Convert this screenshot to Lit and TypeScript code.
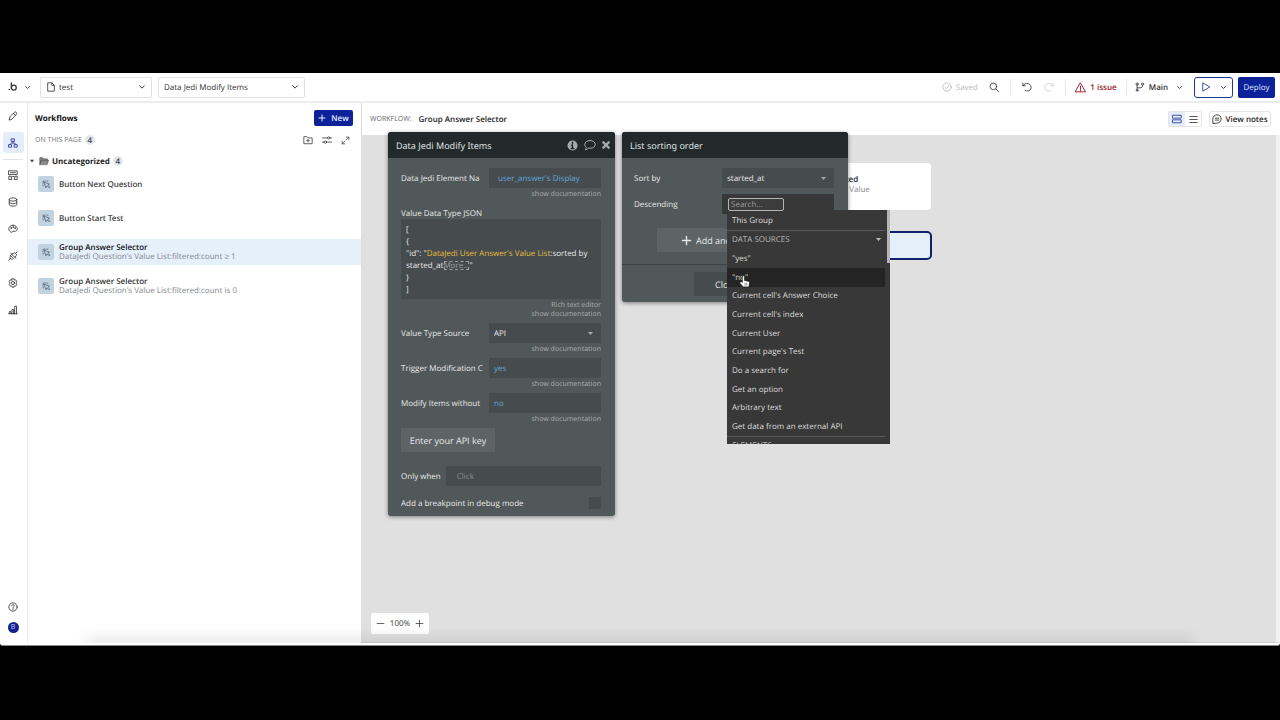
import { LitElement, html, css, svg, nothing } from "lit";
import { customElement, property } from "lit/decorators.js";
import { classMap } from "lit/directives/class-map.js";

const glyphs: Record<string, unknown> = {
  logo: svg`<circle cx="3" cy="18" r="1.8" fill="currentColor" stroke="none"/><path d="M8 2v12" stroke-width="3"/><circle cx="14" cy="13.5" r="5.8" stroke-width="3"/>`,
  down: svg`<path d="M5 8.500l7 7 7-7"/>`,
  file: svg`<path d="M5 2h9l6 6v14H5z"/><path d="M14 2v6h6"/>`,
  pencil: svg`<path d="M3 21l1.500-7L15 3.500a3.200 3.200 0 0 1 5 0 3.200 3.200 0 0 1 0 4.500L10 19z"/><path d="M13 5.500l5.500 5.500"/>`,
  tree: svg`<rect x="8.500" y="2" width="7" height="6"/><rect x="2" y="16" width="6.500" height="6"/><rect x="15.500" y="16" width="6.500" height="6"/><path d="M12 8v4M5 16l3-4h8l3 4"/>`,
  layout: svg`<rect x="2" y="2" width="20" height="9"/><path d="M2 22v-7h5l2 7zM22 22v-7h-5l-2 7zM9 16h6M6 6.500h12"/>`,
  db: svg`<ellipse cx="12" cy="6" rx="9" ry="4"/><path d="M3 6v12c0 2.200 3.800 4 9 4s9-1.800 9-4V6M3 12c0 2.200 3.800 4 9 4s9-1.800 9-4"/>`,
  palette: svg`<path d="M12 3c-6 0-10 4-10 8.500S5.500 20 9 20c2 0 1.500-2 3-3s3 1.500 6 .5 4-3.500 4-6C22 6.500 18 3 12 3z"/><circle cx="7.500" cy="9.500" r="1"/><circle cx="12.500" cy="7.500" r="1"/><circle cx="17" cy="10" r="1"/>`,
  plug: svg`<path d="M2 22l4.500-4.500M6 11l7 7-2.500 1.500c-2 1-4 .5-5-1s-1.500-3-.5-4.500zM9 8l7 7 3-3c2-2 1.500-4.500 0-6s-4-2-6-.5zM19 5l3-3M7 5l2 3M16 15l3 2"/>`,
  gear: svg`<path d="M9.500 2h5l1 3.200 3.200-.7 2.500 4.200-2.200 3.300 2.200 3.300-2.500 4.200-3.200-.7-1 3.200h-5l-1-3.200-3.200.7-2.500-4.200L5 12 2.800 8.700l2.500-4.200 3.200.7z"/><circle cx="12" cy="12" r="3.800"/>`,
  bars: svg`<path d="M2 21h20M3 21v-5h4v5M9.500 21V11h4v10M16 21V3h4.500v18"/>`,
  help: svg`<circle cx="12" cy="12" r="10"/><path d="M8.800 9.300C9 7.500 10.300 6.500 12 6.500s3.200 1.100 3.200 2.800c0 2.300-3.200 2.300-3.200 4.700M12 16.200v1.800"/>`,
  plus: svg`<path d="M12 3v18M3 12h18"/>`,
  minus: svg`<path d="M3 12h18"/>`,
  addFolder: svg`<path d="M2 20V4h7l2 3h11v13zM12 10.500v6M9 13.500h6"/>`,
  sliders: svg`<path d="M1 7h12M19 7h4M1 17h4M11 17h12"/><circle cx="16" cy="7" r="2.800"/><circle cx="8" cy="17" r="2.800"/>`,
  expand: svg`<path d="M14 3h7v7M21 3l-7.500 7.500M10 21H3v-7M3 21l7.500-7.500"/>`,
  folder: svg`<path d="M2 20V4h7l2 3h9v3M2 20L5.500 10H23l-3.500 10z" fill="#8a8a8a"/>`,
  tri: svg`<path d="M3 7h18l-9 10z" fill="currentColor" stroke="none"/>`,
  click: svg`<path d="M6 6l14 5-4.500 2.500L21 19l-2 2-5.500-5.500L11 20zM3 9V3h6M3 13v3M13 3h3"/>`,
  saved: svg`<circle cx="12" cy="12" r="10"/><path d="M7 12.500l3.500 3.500L17 8.500"/>`,
  search: svg`<circle cx="10.500" cy="10.500" r="8"/><path d="M16.500 16.500L23 23"/>`,
  undo: svg`<path d="M2 3v6h6M2.500 9C5 4 10 2.500 14.500 4a9 9 0 1 1-7 16"/>`,
  redo: svg`<path d="M22 3v6h-6M21.500 9C19 4 14 2.500 9.500 4a9 9 0 1 0 7 16"/>`,
  warn: svg`<path d="M12 2.500L23 21.500H1zM12 9v7M12 18v1.800"/>`,
  branch: svg`<circle cx="5" cy="5" r="2.600"/><circle cx="5" cy="20" r="2.200"/><circle cx="18" cy="5" r="2.600"/><path d="M5 8v10M18 8c0 5-2 6-6 6H6"/>`,
  play: svg`<path d="M5 2.500L21 12 5 21.500z"/>`,
  cards: svg`<rect x="2" y="3" width="20" height="7"/><rect x="2" y="14" width="20" height="7"/>`,
  lines: svg`<path d="M2 4h20M2 12h20M2 20h20"/>`,
  note: svg`<path d="M2 22V12a10 10 0 1 1 10 10z"/><path d="M8 10h8M8 14.500h8"/>`,
  info: svg`<circle cx="12" cy="12" r="11" fill="currentColor" stroke="none"/><path d="M12 5v3M9.500 11.500H12V18M9 18.500h6" stroke="#22282a" stroke-width="3"/>`,
  bubble: svg`<path d="M12 3c6 0 10.500 3.500 10.500 8S18 18.500 12 18.500c-1 0-2-.1-3-.4C7 20 4.500 21.500 2.500 21.500c1.200-1.200 2-3 2-4.800C2.500 15 1.500 13 1.500 11c0-4.500 4.500-8 10.500-8z"/>`,
  cross: svg`<path d="M4 4l16 16M20 4L4 20" stroke-width="7"/>`,
  hand: svg`<path d="M8 13V3.500a2 2 0 0 1 4 0V10l7 1.500c2 .5 2.500 2 2.300 4L20 22H9.500L3.500 15c-1-1.500.8-3.500 2.500-2.500z" fill="#fff" stroke="#111" stroke-width="1.200"/><path d="M13 15v4M16 15v4" stroke="#333" stroke-width="1"/>`,
};

@customElement("bub-icon")
class BubIcon extends LitElement {
  @property() name = "";
  @property({ type: Number }) size = 11;
  @property({ type: Number }) weight = 2;
  static styles = css`
    :host { display: inline-flex; flex: none; }
    svg { display: block; fill: none; stroke: currentColor; stroke-linecap: round; stroke-linejoin: round; }
  `;
  render() {
    return html`<svg width=${this.size} height=${this.size} viewBox="0 0 24 24" stroke-width=${this.weight} aria-hidden="true">${glyphs[this.name]}</svg>`;
  }
}

const ic = (name: string, size = 11, weight = 2) =>
  html`<bub-icon .name=${name} .size=${size} .weight=${weight}></bub-icon>`;

const base = css`
  *, :host { box-sizing: border-box; }
  button, input, select { font: inherit; text-rendering: inherit; color: inherit; margin: 0; padding: 0; border: 0; background: none; border-radius: 0; outline: none; }
  select { appearance: none; }
  button { display: inline-flex; align-items: center; justify-content: center; }
  .pick { display: grid; align-items: center; }
  .pick > * { grid-area: 1 / 1; }
  .pick > bub-icon { justify-self: end; pointer-events: none; }
`;

@customElement("top-bar")
class TopBar extends LitElement {
  static styles = [base, css`
    :host { display: flex; align-items: center; height: 30px; padding: 0 5px 0 8px; background: #fff; border-bottom: 2px solid #ececec; color: #333; }
    .brand { gap: 6px; width: 22px; margin-right: 10px; }
    .pick { height: 21px; border: 1px solid #e2e2e2; border-radius: 2px; margin-right: 6px; padding-right: 5px; }
    .page { width: 112px; padding-left: 5px; }
    .page select { padding-left: 13px; }
    .item { width: 147px; padding-left: 5px; }
    .page .lead { justify-self: start; }
    .right { margin-left: auto; display: flex; align-items: center; }
    .right > * { height: 16px; display: flex; align-items: center; justify-content: center; }
    .saved { gap: 4px; color: #b9b9b9; }
    .search { width: 32px; }
    .undo { width: 32px; border-left: 1px solid #e6e6e6; }
    .redo { width: 23px; color: #ccc; padding-right: 9px; }
    .issue { width: 62px; gap: 4px; color: #951420; border: solid #e6e6e6; border-width: 0 1px; font-weight: 600; }
    .main { width: 64px; gap: 4px; font-weight: 600; margin-right: 3px; }
    .main span { margin-right: 4px; }
    .right .play { width: 39px; height: 21px; gap: 9px; border: 1px solid #1c3a94; border-radius: 3px; color: #1c2f94; margin-right: 5px; }
    .right .deploy { width: 37px; height: 21px; border-radius: 2px; background: #0d2298; color: #dfe5fa; }
  `];
  render() {
    return html`
      <button class="brand" aria-label="Menu">${ic("logo", 10, 2)}${ic("down", 7, 3)}</button>
      <div class="pick page"><bub-icon class="lead" .name=${"file"} .size=${10}></bub-icon><select aria-label="Page"><option>test</option></select>${ic("down", 8, 3)}</div>
      <div class="pick item"><select aria-label="Element"><option>Data Jedi Modify Items</option></select>${ic("down", 8, 3)}</div>
      <div class="right">
        <span class="saved">${ic("saved", 10)}Saved</span>
        <button class="search" aria-label="Search">${ic("search", 10, 2)}</button>
        <button class="undo" aria-label="Undo">${ic("undo", 10, 2)}</button>
        <button class="redo" aria-label="Redo">${ic("redo", 10, 2)}</button>
        <button class="issue">${ic("warn", 11)}1 issue</button>
        <button class="main">${ic("branch", 10)}<span>Main</span>${ic("down", 7, 3)}</button>
        <button class="play" aria-label="Preview">${ic("play", 10)}${ic("down", 7, 3)}</button>
        <button class="deploy">Deploy</button>
      </div>`;
  }
}

@customElement("side-rail")
class SideRail extends LitElement {
  static styles = [base, css`
    :host { display: flex; flex-direction: column; align-items: center; gap: 6px; width: 28px; padding: 2px 2px 8px 1px; background: #fff; border-right: 1px solid #e8e8e8; color: #333; }
    button { width: 21px; height: 21px; border-radius: 2px; }
    .on { background: #e4eefb; color: #26339a; }
    hr { width: 20px; height: 1px; border: 0; margin: 0 0 -2px; background: #e2e2e2; }
    .help { margin-top: auto; margin-bottom: -1px; }
    .me { width: 11px; height: 11px; border-radius: 50%; background: #12218c; color: #c8d0ff; font-size: 7px; margin-bottom: 2px; }
  `];
  render() {
    return html`
      <button aria-label="Design">${ic("pencil", 10)}</button>
      <button class="on" aria-label="Workflow">${ic("tree", 10)}</button>
      <hr />
      ${["layout", "db", "palette", "plug", "gear", "bars"].map((n) => html`<button aria-label=${n}>${ic(n, 10)}</button>`)}
      <button class="help" aria-label="Help">${ic("help", 10)}</button>
      <button class="me" aria-label="Account">B</button>`;
  }
}

@customElement("workflow-list")
class WorkflowList extends LitElement {
  rows = [
    { title: "Button Next Question" },
    { title: "Button Start Test" },
    { title: "Group Answer Selector", note: "DataJedi Question's Value List:filtered:count ≥ 1", on: true },
    { title: "Group Answer Selector", note: "DataJedi Question's Value List:filtered:count is 0" },
  ] as { title: string; note?: string; on?: boolean }[];
  static styles = [base, css`
    :host { display: flex; flex-direction: column; width: 333px; background: #fff; color: #333; }
    .head { display: flex; align-items: center; justify-content: space-between; height: 30px; padding: 0 8px 0 7px; }
    h2 { margin: 0; font-size: 8px; font-weight: 700; color: #111; }
    .new { width: 39px; height: 16px; gap: 5px; border-radius: 2px; background: #0d2298; color: #e8ecff; font-weight: 600; }
    .sub { display: flex; align-items: center; height: 14px; padding: 0 11px 0 7px; font-size: 7px; color: #777; }
    .count { display: inline-flex; justify-content: center; align-items: center; width: 10px; height: 10px; border-radius: 5px; background: #e3e7ec; color: #444; font-size: 8px; font-weight: 600; margin-left: 3px; }
    .tools { margin-left: auto; display: flex; gap: 9px; color: #444; }
    .group { display: flex; align-items: center; height: 16px; margin: 6px 0 2px; padding-left: 1px; font-weight: 700; color: #222; gap: 3px; }
    .group button { gap: 4px; color: #444; }
    .group .count { margin-left: 0; }
    .list { display: flex; flex-direction: column; gap: 8px; }
    .row { display: flex; justify-content: flex-start; text-align: left; gap: 5px; height: 26px; padding-left: 10px; }
    .on { background: #e6f0fb; }
    .on b { color: #111; }
    b { display: block; font-weight: 500; font-family: "Noto Sans", sans-serif; }
    .noted b { font-weight: 600; font-family: "Open Sans", sans-serif; }
    .note { display: block; color: #8b8f94; font-family: "Noto Sans", sans-serif; }
    .text { line-height: 9px; }
    .ico { display: flex; align-items: center; justify-content: center; width: 16px; height: 16px; border-radius: 2px; background: #c3d2df; color: #4c6378; }
  `];
  render() {
    return html`
      <div class="head"><h2>Workflows</h2><button class="new">${ic("plus", 8, 3)}New</button></div>
      <div class="sub">ON THIS PAGE<span class="count">4</span>
        <div class="tools"><button aria-label="New folder">${ic("addFolder", 10)}</button><button aria-label="Filter">${ic("sliders", 10)}</button><button aria-label="Expand">${ic("expand", 9)}</button></div>
      </div>
      <div class="group"><button aria-label="Collapse">${ic("tri", 6)}${ic("folder", 10, 1.5)}</button>Uncategorized<span class="count">4</span></div>
      <div class="list">
        ${this.rows.map((r) => html`<button class=${classMap({ row: true, on: !!r.on, noted: !!r.note })}>
          <span class="ico">${ic("click", 9)}</span>
          <span class="text"><b>${r.title}</b>${r.note ? html`<span class="note">${r.note}</span>` : nothing}</span>
        </button>`)}
      </div>`;
  }
}

const panel = css`
  .panel { background: #515859; color: #e6e8e8; border-radius: 3px; box-shadow: 0 1px 4px rgba(0, 0, 0, 0.45); }
  .bar { display: flex; align-items: center; height: 26px; padding: 0 5px 0 8px; background: #22292a; border-radius: 3px 3px 0 0; gap: 6px; color: #a4a9a9; }
  .bar h3 { margin: 0; flex: 1; font-family: "Noto Sans", sans-serif; font-size: 9px; font-weight: 400; color: #dfe2e2; }
  .field { height: 20px; background: #464c4d; min-width: 0; width: 100%; }
  .line { display: flex; justify-content: space-between; align-items: center; height: 20px; }
  .line .pick, .line > input { width: 112px; flex: none; }
  .line select, .line input { padding-left: 5px; }
  .line label { white-space: nowrap; }
  .pick > bub-icon { color: #a0a5a5; margin-right: 7px; }
`;

@customElement("modify-panel")
class ModifyPanel extends LitElement {
  static styles = [base, panel, css`
    :host { display: block; }
    .body { padding: 10px 14px 7px 13px; }
    .doc { display: block; height: 12px; margin-bottom: 3px; font-family: "Noto Sans", sans-serif; font-size: 7px; line-height: 14px; text-align: right; color: #a4a9a9; text-decoration: none; }
    .line .expr { color: #62a5dd; }
    .line .inset { padding-left: 9px; }
    .head { display: block; height: 12px; margin-top: 7px; line-height: 13px; }
    .json { min-height: 80px; padding: 5px 5px 3px; line-height: 12px; background: #464c4d; }
    .json em { font-style: normal; color: #e3bd3f; }
    .json i { font-style: normal; color: #9a9f9f; outline: 1px dashed #9a9f9f; outline-offset: -2px; }
    .links { display: flex; flex-direction: column; align-items: flex-end; padding-top: 2px; margin-bottom: 4px; font-family: "Noto Sans", sans-serif; font-size: 7px; }
    .links a { line-height: 9px; color: #a4a9a9; text-decoration: none; }
    .key { width: 94px; height: 24px; background: #5e6465; font-size: 9px; }
    .when { display: flex; align-items: center; gap: 5px; margin-top: 14px; white-space: nowrap; }
    .when input { padding-left: 11px; }
    .when input::placeholder { color: #898e8f; opacity: 1; }
    .break { display: flex; justify-content: space-between; align-items: center; margin-top: 11px; height: 12px; }
    .break input { appearance: none; width: 12px; height: 12px; background: #464c4d; }
  `];
  doc = html`<a class="doc" href="#">show documentation</a>`;
  render() {
    return html`<section class="panel">
      <header class="bar"><h3>Data Jedi Modify Items</h3><button aria-label="Info">${ic("info", 11)}</button><button aria-label="Comment">${ic("bubble", 12)}</button><button aria-label="Close">${ic("cross", 8)}</button></header>
      <div class="body">
        <div class="line"><label for="name">Data Jedi Element Na</label><input id="name" class="field expr inset" value="user_answer's Display" /></div>
        ${this.doc}
        <span class="head" id="json">Value Data Type JSON</span>
        <div class="json" role="textbox" aria-labelledby="json">[<br />{<br />"id": "<em>DataJedi User Answer's Value List</em>:sorted by started_at<i>More...</i>"<br />}<br />]</div>
        <div class="links"><a href="#">Rich text editor</a><a href="#">show documentation</a></div>
        <div class="line"><label for="src">Value Type Source</label><div class="pick"><select id="src" class="field"><option>API</option></select>${ic("tri", 7)}</div></div>
        ${this.doc}
        <div class="line"><label for="trig">Trigger Modification C</label><input id="trig" class="field expr" value="yes" /></div>
        ${this.doc}
        <div class="line"><label for="mod">Modify Items without</label><input id="mod" class="field expr" value="no" /></div>
        ${this.doc}
        <button class="key">Enter your API key</button>
        <div class="when"><label for="when">Only when</label><input id="when" class="field" placeholder="Click" /></div>
        <div class="break"><label for="brk">Add a breakpoint in debug mode</label><input id="brk" type="checkbox" /></div>
      </div>
    </section>`;
  }
}

@customElement("source-menu")
class SourceMenu extends LitElement {
  items = ['"yes"', '"no"', "Current cell's Answer Choice", "Current cell's index", "Current User", "Current page's Test", "Do a search for", "Get an option", "Arbitrary text", "Get data from an external API"];
  static styles = [base, css`
    :host { display: block; position: relative; height: 234px; padding: 2px 5px 0 0; overflow: hidden; background: #383838; color: #dcdcdc; }
    .list { display: grid; grid-template-rows: repeat(12, 1fr); height: 224px; }
    .list > button, .more { justify-content: space-between; text-align: left; padding: 0 3px 0 5px; white-space: nowrap; }
    .list > .top { border-bottom: 1px solid #5a5a5a; }
    .sect { color: #b9b9b9; }
    .hot { background: #242424; }
    .more { border-top: 1px solid #5a5a5a; color: #b9b9b9; line-height: 18px; }
    .thumb { position: absolute; top: 0; right: 0; width: 3px; height: 53px; background: #b5b5b5; }
    .cursor { position: absolute; left: 11px; top: 65px; }
  `];
  render() {
    return html`<div class="list">
      <button class="top">This Group</button>
      <button class="sect">DATA SOURCES${ic("tri", 7)}</button>
      ${this.items.map((t, i) => html`<button class=${i === 1 ? "hot" : ""}>${t}</button>`)}
    </div><div class="more">ELEMENTS</div><div class="thumb"></div><bub-icon class="cursor" .name=${"hand"} .size=${13}></bub-icon>`;
  }
}

@customElement("sort-panel")
class SortPanel extends LitElement {
  static styles = [base, panel, css`
    :host { display: block; }
    .body { padding: 10px 14px 12px 12px; display: flex; flex-direction: column; gap: 6px; }
    .combo { position: relative; width: 112px; height: 20px; padding: 4px 6px; background: #383838; }
    .combo input { display: block; position: relative; z-index: 3; width: 56px; height: 13px; padding-left: 2px; border: 1px solid #b4b4b4; border-radius: 2px; background: #3c3c3c; }
    .combo input::placeholder { color: #9a9a9a; opacity: 1; }
    .combo source-menu { position: absolute; left: 5px; top: 16px; width: 163px; z-index: 2; }
    .add { align-self: center; width: 154px; height: 24px; margin-top: 8px; padding-left: 24px; justify-content: flex-start; gap: 4px; background: #5e6465; font-size: 9px; }
    footer { display: flex; justify-content: center; padding: 7px 0 6px; border-top: 1px solid #3c4344; }
    .close { width: 82px; height: 24px; background: #464c4d; font-size: 9px; justify-content: flex-start; padding-left: 21px; }
  `];
  render() {
    return html`<section class="panel">
      <header class="bar"><h3>List sorting order</h3></header>
      <div class="body">
        <div class="line"><label for="by">Sort by</label><div class="pick"><select id="by" class="field"><option>started_at</option></select>${ic("tri", 7)}</div></div>
        <div class="line"><label for="desc">Descending</label><div class="combo"><input id="desc" placeholder="Search..." /><source-menu></source-menu></div></div>
        <button class="add">${ic("plus", 11, 3)}Add another</button>
      </div>
      <footer><button class="close">Close</button></footer>
    </section>`;
  }
}

@customElement("work-area")
class WorkArea extends LitElement {
  static styles = [base, css`
    :host { display: flex; flex-direction: column; flex: 1; min-width: 0; }
    .head { display: flex; align-items: center; height: 32px; padding: 0 9px 0 8px; background: #fff; color: #222; border-left: 1px solid #dcdcdc; }
    .kind { font-size: 7px; color: #666; margin-right: 7px; }
    .name { font-weight: 600; margin-right: auto; }
    .toggle { display: flex; height: 16px; border: 1px solid #e4e4e4; border-radius: 2px; margin-right: 7px; }
    .toggle button { width: 16px; }
    .toggle .on { background: #e4eefb; color: #26339a; }
    .notes { width: 62px; height: 16px; gap: 3px; border: 1px solid #e4e4e4; border-radius: 3px; font-weight: 600; white-space: nowrap; }
    .canvas { position: relative; flex: 1; background: #e0e0e0; border-right: 4px solid #f2f2f2; border-bottom: 1px solid #cfcfcf; }
    .canvas > * { position: absolute; }
    .step { left: 423px; top: 28px; width: 147px; height: 47px; padding: 12px 0 0 32px; border-radius: 4px; background: #fff; line-height: 10px; color: #8a8a8a; }
    .step b { display: block; font-weight: 600; color: #222; }
    .next { left: 423px; top: 96px; width: 148px; height: 29px; border: 2px solid #14206f; border-radius: 5px; background: #e6f0fb; }
    modify-panel { left: 27px; top: -3px; width: 227px; }
    sort-panel { left: 261px; top: -3px; width: 226px; }
    .zoom { left: 10px; bottom: 8px; display: flex; align-items: center; justify-content: center; gap: 5px; width: 58px; height: 21px; border-radius: 2px; background: #fff; color: #333; }
  `];
  render() {
    return html`
      <div class="head"><span class="kind">WORKFLOW:</span><span class="name">Group Answer Selector</span>
        <div class="toggle"><button class="on" aria-label="Cards">${ic("cards", 10)}</button><button aria-label="List">${ic("lines", 9)}</button></div>
        <button class="notes">${ic("note", 10)}View notes</button>
      </div>
      <div class="canvas">
        <div class="step"><b>Completed</b>DataJedi Value</div>
        <div class="next"></div>
        <modify-panel></modify-panel>
        <sort-panel></sort-panel>
        <div class="zoom"><button aria-label="Zoom out">${ic("minus", 9)}</button>100%<button aria-label="Zoom in">${ic("plus", 9)}</button></div>
      </div>`;
  }
}

@customElement("app-root")
class AppRoot extends LitElement {
  static styles = css`
    :host { display: flex; flex-direction: column; box-sizing: border-box; height: 100vh; padding: 73px 0 74px; background: #000; font: 8px/13px "Open Sans", "Noto Sans", sans-serif; text-rendering: geometricPrecision; }
    .window { position: relative; flex: 1; min-height: 0; display: flex; flex-direction: column; background: #fff; border-radius: 0 0 3px 3px; border-bottom: 1px solid #888; padding-bottom: 2px; }
    .main { flex: 1; min-height: 0; display: flex; }
    .shade { position: absolute; left: 6%; right: 6%; bottom: 2px; height: 16px; background: linear-gradient(rgba(0, 0, 0, 0), rgba(0, 0, 0, 0.07)); pointer-events: none; mask-image: linear-gradient(90deg, transparent, #000 20px, #000 calc(100% - 20px), transparent); }
  `;
  render() {
    return html`<div class="window">
      <top-bar></top-bar>
      <div class="main"><side-rail></side-rail><workflow-list></workflow-list><work-area></work-area></div>
      <div class="shade"></div>
    </div>`;
  }
}
